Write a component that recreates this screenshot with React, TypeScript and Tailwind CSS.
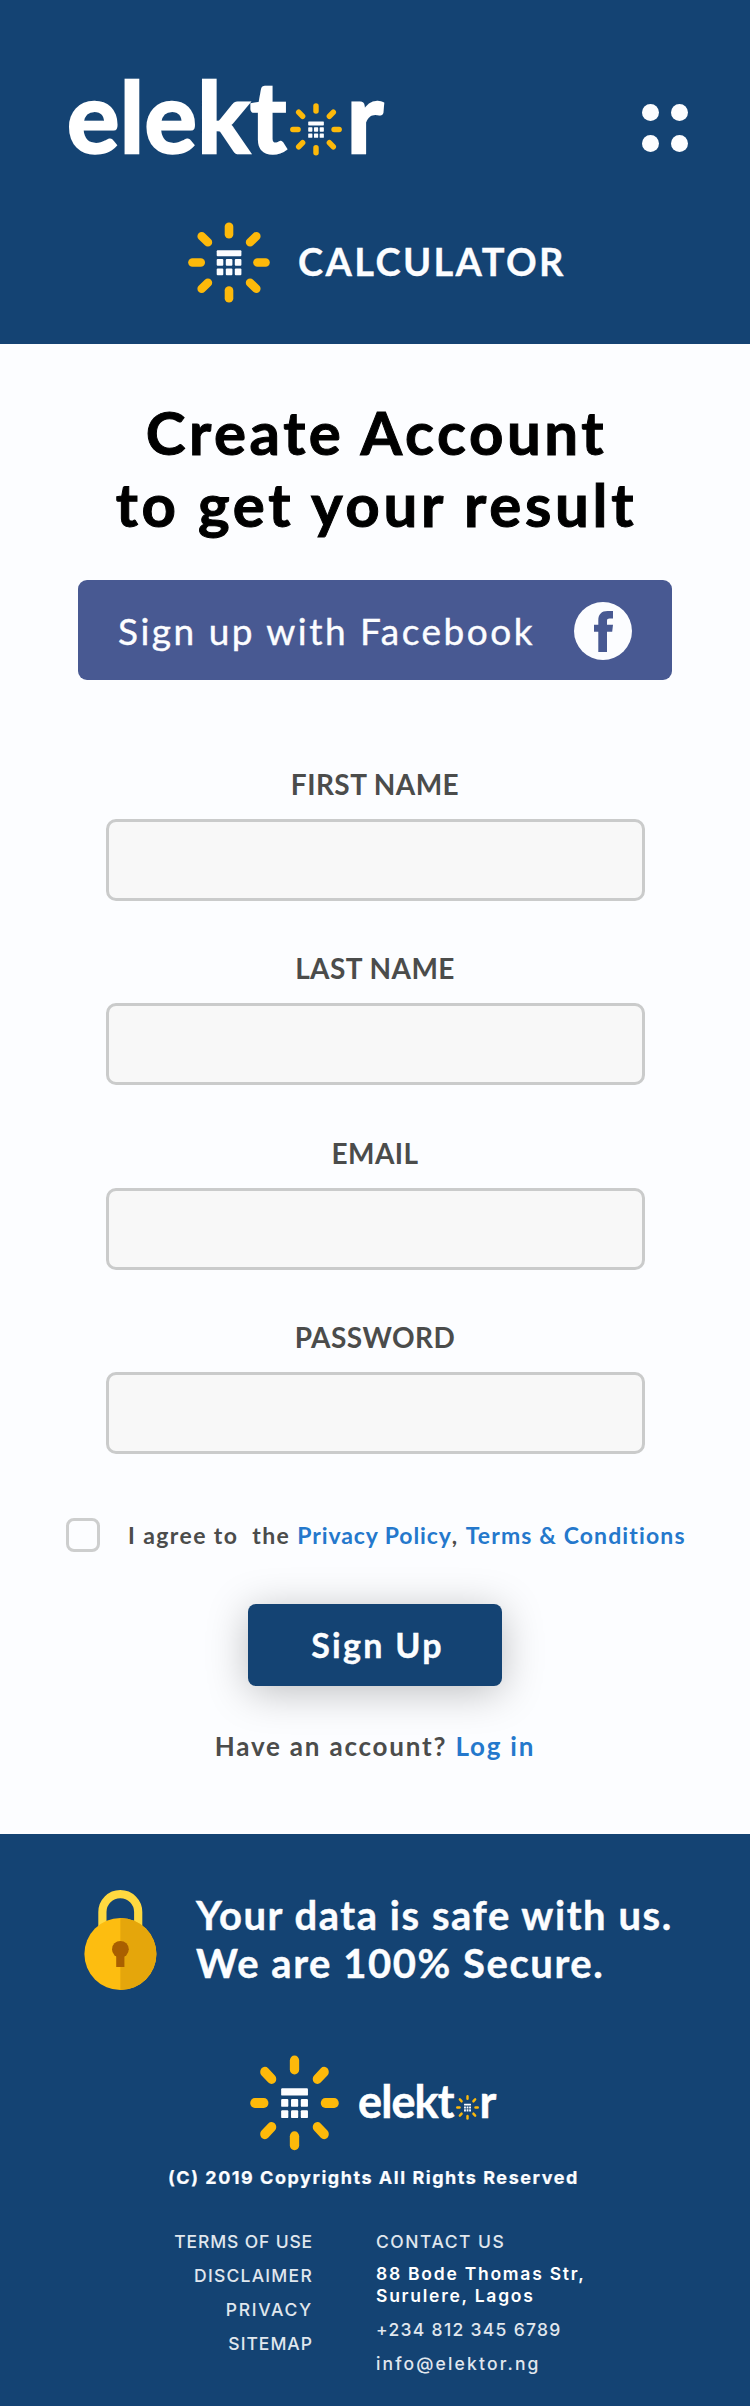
const DIAGONALS = [
  "M13.7 14.4L19.9 20.5",
  "M68.3 14.4L62.1 20.5",
  "M13.7 67.6L19.9 61.5",
  "M68.3 67.6L62.1 61.5",
];

function Sun({ className }: { className: string }) {
  return (
    <svg viewBox="0 0 82 82" preserveAspectRatio="none" className={className} aria-hidden="true">
      <g stroke="#fdb90a" strokeWidth="8.6" strokeLinecap="round">
        <path d="M41 4.7V12.4" />
        <path d="M41 69.4V77.1" />
        <path d="M4.5 41H12.7" />
        <path d="M69.5 41H77.5" />
        {DIAGONALS.map((d) => (
          <path key={d} d={d} />
        ))}
      </g>
      <g fill="#fcfdff">
        <rect x="28.7" y="28.5" width="24.7" height="6.2" rx="1" />
        {[37.5, 47.1].map((y) =>
          [28.7, 37.8, 46.8].map((x) => (
            <rect key={`${x}-${y}`} x={x} y={y} width="6.6" height="6.8" rx="1" />
          )),
        )}
      </g>
    </svg>
  );
}

function Lock() {
  return (
    <svg viewBox="0 0 73 100" className="h-[100px] w-[73px] shrink-0" aria-hidden="true">
      <path d="M18.4 46V22a17.9 17.9 0 0 1 35.8 0V46" fill="none" stroke="#ffd940" strokeWidth="8.2" />
      <circle cx="36.4" cy="64" r="36" fill="#fdbd10" />
      <path d="M36.4 28a36 36 0 0 1 0 72Z" fill="#e5a60b" />
      <circle cx="36.4" cy="59.3" r="8.4" fill="#a95f00" />
      <path d="M32.2 59H40.4V77H32.2Z" fill="#a95f00" />
    </svg>
  );
}

function FacebookMark() {
  return (
    <svg viewBox="0 0 58 58" className="mt-[2px] h-[58px] w-[58px]" aria-hidden="true">
      <circle cx="29" cy="29" r="29" fill="#fcfdff" />
      <path
        d="M24.3 50V29.7H20V22.7H24.3V18.5C24.3 12.2 27.6 9 33.6 9H39V16.6H35.6C33.7 16.6 33 17.3 33 19V22.7H39L38.2 29.7H33V50Z"
        fill="#485992"
      />
    </svg>
  );
}

function Field({ label, type }: { label: string; type: string }) {
  return (
    <label className="flex flex-col items-center gap-[21px]">
      <span className="pt-px text-[28px] leading-none font-bold tracking-[0.45px] text-[#4b4c4b]">{label}</span>
      <input type={type} className="h-[82px] w-[539px] rounded-[10px] border-3 border-[#cacbcb] bg-[#f8f8f8] px-5" />
    </label>
  );
}

export default function App() {
  return (
    <div className="flex h-[2406px] w-[750px] flex-col bg-[#fcfdff] font-['Lato',sans-serif] whitespace-nowrap">
      <header className="h-[344px] shrink-0 bg-[#144373] pt-[66px] text-[#fcfdff]">
        <div className="flex h-[98px] items-start justify-between pr-[62px] pl-[67px]">
          <div className="flex items-start text-[98px] leading-none font-bold text-white">
            <span className="tracking-[0.4px] [-webkit-text-stroke:2.5px_white]">elekt</span>
            <Sun className="mt-[36.5px] ml-[3px] h-[53px] w-[52px]" />
            <span className="ml-[5px] [-webkit-text-stroke:2.5px_white]">r</span>
          </div>
          <button className="mt-[38px] grid grid-cols-2 gap-x-3 gap-y-[14px]" aria-label="Menu">
            <span className="size-[17px] rounded-full bg-[#fcfdff]" />
            <span className="size-[17px] rounded-full bg-[#fcfdff]" />
            <span className="size-[17px] rounded-full bg-[#fcfdff]" />
            <span className="size-[17px] rounded-full bg-[#fcfdff]" />
          </button>
        </div>
        <div className="mt-[58px] flex items-start pl-[188px]">
          <Sun className="h-[81px] w-[82px]" />
          <span className="mt-5 ml-7 text-[38px] leading-none font-bold tracking-[2.37px] [-webkit-text-stroke:0.3px_#fcfdff]">
            CALCULATOR
          </span>
        </div>
      </header>

      <main className="flex h-[1490px] shrink-0 flex-col items-center pt-[52px]">
        <h1 className="pl-[3px] text-center text-[60px] leading-[72px] font-bold tracking-[3.57px] text-black [-webkit-text-stroke:1px_black]">
          Create Account
          <br />
          <span className="tracking-[3.68px]">to get your result</span>
        </h1>

        <button className="mt-10 flex h-[100px] w-[594px] items-center justify-between rounded-[9px] bg-[#485992] pr-10 pl-10 text-[37px] leading-none tracking-[2.5px] text-[#fcfdff] [-webkit-text-stroke:0.4px_#fcfdff]">
          <span>Sign up with Facebook</span>
          <FacebookMark />
        </button>

        <form className="mt-[89px] flex flex-col items-center">
          <div className="flex flex-col gap-[52.3px]">
            <Field label="FIRST NAME" type="text" />
            <Field label="LAST NAME" type="text" />
            <Field label="EMAIL" type="email" />
            <Field label="PASSWORD" type="password" />
          </div>

          <label className="mt-16 flex w-[750px] items-center gap-7 pl-[66px] text-[23px] leading-none font-bold text-[#4b4c4b]">
            <input type="checkbox" className="size-[34px] appearance-none rounded-[8px] border-3 border-[#cdcece] bg-[#fcfdff]" />
            <span className="pt-[2px] tracking-[1.4px]">
              I agree to{"\u00a0 "}the{" "}
              <a className="tracking-[0.9px] text-[#2478cc]">Privacy Policy</a>,{" "}
              <a className="tracking-[1.12px] text-[#2478cc]">Terms &amp; Conditions</a>
            </span>
          </label>

          <button
            type="button"
            className="mt-[52px] h-[82px] w-[254px] rounded-[8px] bg-[#144373] pt-px pl-[5px] text-[34px] leading-none font-bold tracking-[2.3px] text-[#fcfdff] shadow-[0_6px_40px_rgba(0,0,0,0.25)] [-webkit-text-stroke:0.4px_#fcfdff]"
          >
            Sign Up
          </button>
        </form>

        <p className="mt-[47px] text-[26px] leading-none font-bold tracking-[1.8px] text-[#4b4c4b]">
          Have an account? <a className="text-[#2478cc]">Log in</a>
        </p>
      </main>

      <footer className="h-[572px] shrink-0 bg-[#144373] pt-14 text-[#fcfdff]">
        <div className="flex h-[100px] items-start pl-[84px]">
          <Lock />
          <p className="mt-px ml-[39px] text-[40px] leading-[48px] font-bold tracking-[1.55px] [-webkit-text-stroke:0.4px_#fcfdff]">
            Your data is safe with us.
            <br />
            We are 100% Secure.
          </p>
        </div>

        <div className="mt-[65px] flex h-24 items-start pl-[250px]">
          <Sun className="h-24 w-[89px]" />
          <div className="mt-[23.5px] ml-[19px] flex items-start text-[45px] leading-none font-bold text-white">
            <span className="tracking-[-0.9px] [-webkit-text-stroke:0.5px_white]">elekt</span>
            <Sun className="mt-[16.5px] ml-[2px] h-[25px] w-[23px]" />
            <span className="ml-px [-webkit-text-stroke:0.5px_white]">r</span>
          </div>
        </div>

        <div className="font-['Inter',sans-serif]">
          <p className="mt-[18px] pl-[168px] text-[18px] leading-none font-bold tracking-[1.53px] [-webkit-text-stroke:0.2px_#fcfdff]">
            (C) 2019 Copyrights All Rights Reserved
          </p>
          <div className="mt-[38px] flex text-[17.5px] leading-[34px] font-medium text-[#e0e7ee]">
            <nav className="flex w-[313px] flex-col items-end">
              <a className="tracking-[0.85px]">TERMS OF USE</a>
              <a className="tracking-[1.25px]">DISCLAIMER</a>
              <a className="tracking-[1.7px]">PRIVACY</a>
              <a className="tracking-[1px]">SITEMAP</a>
            </nav>
            <div className="ml-[63px] flex flex-col">
              <span className="tracking-[1.5px]">CONTACT US</span>
              <address className="mt-1 mb-[6px] leading-[22px] font-semibold tracking-[1.75px] text-white not-italic">
                88 Bode Thomas Str,
                <br />
                Surulere, Lagos
              </address>
              <span className="tracking-[1.3px]">+234 812 345 6789</span>
              <a className="tracking-[2.15px]">info@elektor.ng</a>
            </div>
          </div>
        </div>
      </footer>
    </div>
  );
}
